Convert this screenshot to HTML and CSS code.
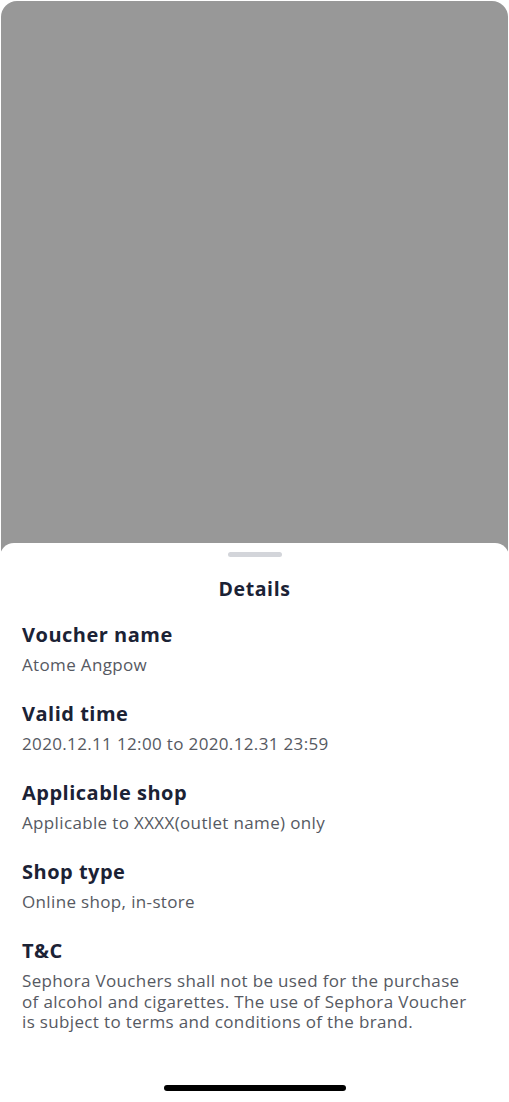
FILE: index.html
```html
<!DOCTYPE html>
<html lang="en">
<head>
<meta charset="utf-8">
<title>Details</title>
<link rel="stylesheet" href="styles.css">
</head>
<body>
<div class="screen">
  <div class="backdrop"></div>
  <div class="sheet">
    <div class="handle"></div>
    <h1 class="title">Details</h1>
    <div class="section">
      <h2 class="label">Voucher name</h2>
      <p class="value">Atome Angpow</p>
    </div>
    <div class="section">
      <h2 class="label">Valid time</h2>
      <p class="value">2020.12.11 12:00 to 2020.12.31 23:59</p>
    </div>
    <div class="section">
      <h2 class="label">Applicable shop</h2>
      <p class="value">Applicable to XXXX(outlet name) only</p>
    </div>
    <div class="section">
      <h2 class="label">Shop type</h2>
      <p class="value">Online shop, in-store</p>
    </div>
    <div class="section">
      <h2 class="label">T&amp;C</h2>
      <p class="value terms">Sephora Vouchers shall not be used for the purchase of alcohol and cigarettes. The use of Sephora Voucher is subject to terms and conditions of the brand.</p>
    </div>
    <div class="home-bar"></div>
  </div>
</div>
</body>
</html>
```
FILE: styles.css
```css
html, body {
  margin: 0;
  padding: 0;
  background: #ffffff;
}
body {
  font-family: "Open Sans", "Noto Sans", sans-serif;
  width: 509px;
  height: 1102px;
  overflow: hidden;
}
.screen {
  width: 509px;
  height: 1102px;
  padding-top: 1px;
  box-sizing: border-box;
  display: flex;
  flex-direction: column;
}
.backdrop {
  margin: 0 1px;
  height: 560px;
  background: #989898;
  border-radius: 16px 16px 0 0;
  flex: none;
}
.sheet {
  margin-top: -18px;
  flex: 1;
  background: #ffffff;
  border-radius: 14px 14px 0 0;
  padding: 9px 22px 0;
  display: flex;
  flex-direction: column;
}
.handle {
  align-self: center;
  width: 54px;
  height: 5px;
  border-radius: 3px;
  background: #d3d5da;
}
.title {
  margin: 20px 0 22px;
  text-align: center;
  font-size: 19.5px;
  font-weight: 700;
  letter-spacing: 0.6px;
  color: #1b2235;
  line-height: 24px;
}
.section {
  margin-bottom: 26.5px;
}
.label {
  margin: 0;
  font-size: 20px;
  line-height: 24px;
  font-weight: 700;
  letter-spacing: 0.5px;
  color: #1b2235;
}
.value {
  margin: 8px 0 0;
  font-size: 17px;
  line-height: 20.5px;
  letter-spacing: 0.35px;
  color: #565962;
}
.terms {
  max-width: 452px;
}
.home-bar {
  margin-top: auto;
  margin-bottom: 11px;
  align-self: center;
  width: 182px;
  height: 6px;
  border-radius: 3px;
  background: #000000;
}
```
